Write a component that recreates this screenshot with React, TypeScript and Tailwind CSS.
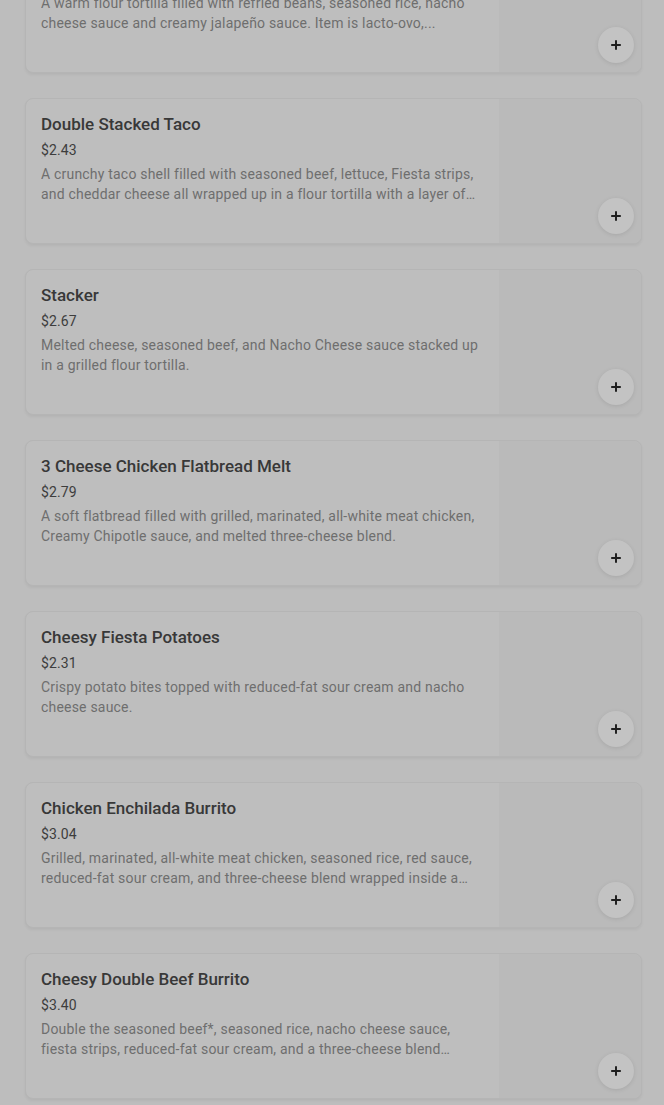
import { Plus } from "lucide-react";

interface MenuItem {
  name: string;
  price: string;
  description: string;
}

const items: MenuItem[] = [
  {
    name: "Bean Burrito",
    price: "$1.99",
    description:
      "A warm flour tortilla filled with refried beans, seasoned rice, nacho cheese sauce and creamy jalapeño sauce. Item is lacto-ovo,...",
  },
  {
    name: "Double Stacked Taco",
    price: "$2.43",
    description:
      "A crunchy taco shell filled with seasoned beef, lettuce, Fiesta strips, and cheddar cheese all wrapped up in a flour tortilla with a layer of nacho cheese sauce.",
  },
  {
    name: "Stacker",
    price: "$2.67",
    description:
      "Melted cheese, seasoned beef, and Nacho Cheese sauce stacked up in a grilled flour tortilla.",
  },
  {
    name: "3 Cheese Chicken Flatbread Melt",
    price: "$2.79",
    description:
      "A soft flatbread filled with grilled, marinated, all-white meat chicken, Creamy Chipotle sauce, and melted three-cheese blend.",
  },
  {
    name: "Cheesy Fiesta Potatoes",
    price: "$2.31",
    description:
      "Crispy potato bites topped with reduced-fat sour cream and nacho cheese sauce.",
  },
  {
    name: "Chicken Enchilada Burrito",
    price: "$3.04",
    description:
      "Grilled, marinated, all-white meat chicken, seasoned rice, red sauce, reduced-fat sour cream, and three-cheese blend wrapped inside a warm flour tortilla.",
  },
  {
    name: "Cheesy Double Beef Burrito",
    price: "$3.40",
    description:
      "Double the seasoned beef*, seasoned rice, nacho cheese sauce, fiesta strips, reduced-fat sour cream, and a three-cheese blend wrapped in a warm flour tortilla.",
  },
];

function MenuCard({ item }: { item: MenuItem }) {
  return (
    <div className="grid h-[146px] grid-cols-[1fr_142px] overflow-hidden rounded-lg border border-[#b5b5b5] bg-[#bebebe] shadow-[0_2px_3px_rgba(0,0,0,0.05)]">
      <div className="flex flex-col pl-[15px] pr-4 pt-[13px]">
        <h3 className="text-[17px] font-medium leading-6 text-[#383838]">
          {item.name}
        </h3>
        <div className="mt-[4px] text-sm leading-5 tracking-[0.1px] text-[#3d3d3d]">
          {item.price}
        </div>
        <p className="mt-[4px] line-clamp-2 text-sm leading-5 tracking-[0.2px] text-[#6e6e6e]">
          {item.description}
        </p>
      </div>
      <div className="relative bg-[#bababa]">
        <button className="absolute bottom-[9px] right-[7px] flex h-9 w-9 items-center justify-center rounded-full bg-[#c3c3c3] text-[#1f1f1f] shadow-[0_1px_4px_rgba(0,0,0,0.1)]">
          <Plus size={14} strokeWidth={3.4} />
        </button>
      </div>
    </div>
  );
}

export default function App() {
  return (
    <div
      className="min-h-[1105px] overflow-hidden bg-[#bdbdbd] pl-[25px] pr-[22px]"
      style={{ fontFamily: "Roboto, 'Liberation Sans', sans-serif" }}
    >
      <div className="mt-[-73px] flex flex-col gap-[25px]">
        {items.map((item) => (
          <MenuCard key={item.name} item={item} />
        ))}
      </div>
    </div>
  );
}
